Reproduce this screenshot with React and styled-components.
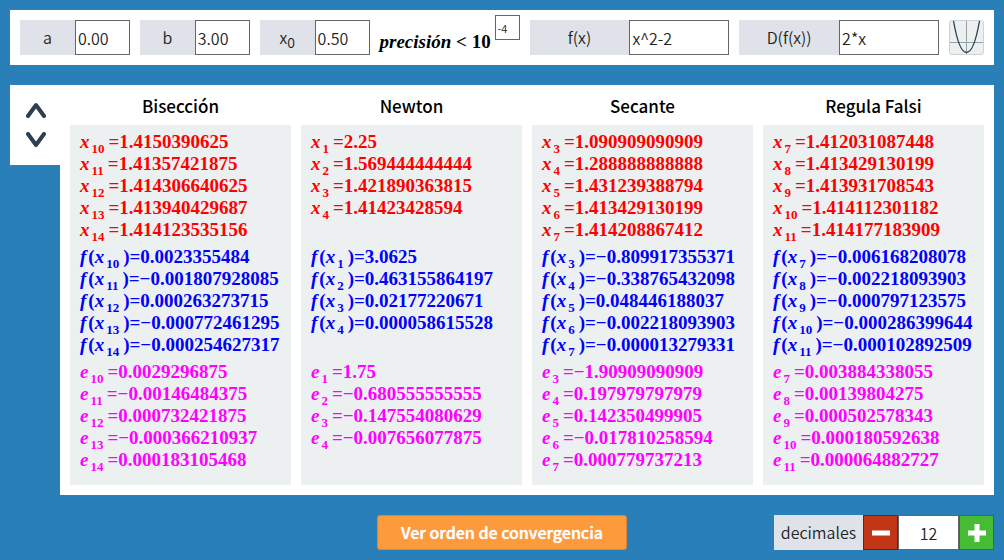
import React, { useState } from "react";
import styled, { createGlobalStyle } from "styled-components";

const sans = '"Noto Sans CJK SC", "Noto Sans", sans-serif';
const serif = '"Liberation Serif", "Times New Roman", serif';

const GlobalStyle = createGlobalStyle`
  * { box-sizing: border-box; }
  body {
    margin: 0;
    background: #2980b9;
    color: #000;
    font-family: ${sans};
    font-size: 16px;
    font-weight: 350;
  }
  input, button { font-family: inherit; font-size: inherit; font-weight: inherit; color: inherit; }
`;

const Page = styled.main`
  display: flex;
  flex-direction: column;
  gap: 20px;
  padding: 10px;
`;

const Toolbar = styled.form`
  display: flex;
  align-items: center;
  gap: 10px;
  padding: 10px;
  background: #fff;
`;

const Field = styled.div`
  display: flex;
  flex: ${(p) => (p.$wide ? "200 1 0" : "110 1 0")};
  min-width: 0;
  height: 35px;
`;

const FieldLabel = styled.label`
  flex: 1 1 50%;
  display: flex;
  align-items: center;
  justify-content: center;
  padding-bottom: 1px;
  background: #dfe2e8;
  color: #222;
  line-height: 24px;
`;

const LabelSub = styled.sub`
  font-size: 14px;
  line-height: 0;
  vertical-align: -4px;
`;

const TextInput = styled.input`
  flex: 1 1 50%;
  min-width: 0;
  padding: 1px 2px;
  border: 1px solid #666;
  border-radius: 0;
  background: #fff;
  color: #222;
`;

const Precision = styled.div`
  flex: none;
  display: flex;
  justify-content: space-between;
  width: 140px;
  height: 45px;
  margin: -5px 0;
`;

const PrecisionLabel = styled.label`
  align-self: center;
  font: bold 19px/22px ${serif};
  padding-top: 8px;
  white-space: nowrap;
`;

const ExponentInput = styled.input`
  width: 25px;
  height: 25px;
  padding: 0 2px;
  border: 1px solid #666;
  background: #fff;
  color: #222;
  font-size: 11px;
`;

const PlotButton = styled.button`
  flex: none;
  width: 35px;
  height: 35px;
  padding: 0;
  border: 1px solid #cbd2d9;
  border-radius: 3px;
  background: #ecf0f1;
  overflow: hidden;
  svg { display: block; }
`;

const Results = styled.div`
  display: flex;
  align-items: flex-start;
`;

const Stepper = styled.nav`
  flex: none;
  display: flex;
  flex-direction: column;
  width: 50px;
  padding: 10px 8px 10px 10px;
  background: #fff;
`;

const StepButton = styled.button`
  display: flex;
  align-items: center;
  justify-content: center;
  height: 30px;
  padding: 0;
  border: 0;
  background: none;
`;

const Methods = styled.div`
  flex: 1;
  min-width: 0;
  display: grid;
  grid-template-columns: repeat(4, minmax(0, 1fr));
  gap: 10px;
  padding: 0 10px 10px;
  background: #fff;
`;

const Method = styled.section`
  display: flex;
  flex-direction: column;
`;

const MethodTitle = styled.h2`
  margin: 0;
  padding-top: 2px;
  font-size: 17px;
  font-weight: 500;
  line-height: 38px;
  text-align: center;
`;

const Values = styled.div`
  display: flex;
  flex-direction: column;
  gap: 5px;
  padding: 6px 10px 14px;
  background: #ecf0f1;
`;

const ValueList = styled.ul`
  list-style: none;
  margin: 0;
  padding: 0;
  min-height: 110px;
  color: ${(p) => p.$color};
  font: bold 19px/22px ${serif};
  white-space: nowrap;
`;

const FunctionName = styled.i`
  margin-right: 2px;
`;

const Index = styled.sub`
  margin: 0 4px 0 2px;
  font-size: 13px;
  line-height: 0;
  vertical-align: -5px;
`;

const Footer = styled.footer`
  display: grid;
  grid-template-columns: 1fr auto 1fr;
`;

const OrderButton = styled.button`
  grid-column: 2;
  width: 250px;
  height: 35px;
  padding: 0 0 2px;
  border: 1px solid #d9853b;
  border-radius: 3px;
  background: #fd9a3c;
  color: #fff;
  font-size: 16px;
  font-weight: 500;
  text-shadow: 0 0 1px #fff;
`;

const Decimals = styled.div`
  justify-self: end;
  display: flex;
  height: 35px;
`;

const DecimalsLabel = styled.label`
  display: flex;
  align-items: center;
  justify-content: center;
  width: 89px;
  padding-bottom: 1px;
  background: #dfe2e8;
  color: #222;
`;

const CountButton = styled.button`
  display: flex;
  align-items: center;
  justify-content: center;
  width: 35px;
  padding: 0;
  border: 1px solid ${(p) => (p.$plus ? "#2b7a26" : "#6e1f12")};
  background: ${(p) => (p.$plus ? "#46bc35" : "#c23616")};
`;

const CountInput = styled.input`
  width: 61px;
  padding: 1px 2px;
  border: 1px solid #666;
  background: #fff;
  color: #222;
  text-align: center;
`;

const methods = [
  {
    name: "Bisección",
    first: 10,
    x: ["1.4150390625", "1.41357421875", "1.414306640625", "1.413940429687", "1.414123535156"],
    f: ["0.0023355484", "−0.001807928085", "0.000263273715", "−0.000772461295", "−0.000254627317"],
    e: ["0.0029296875", "−0.00146484375", "0.000732421875", "−0.000366210937", "0.000183105468"],
  },
  {
    name: "Newton",
    first: 1,
    x: ["2.25", "1.569444444444", "1.421890363815", "1.41423428594"],
    f: ["3.0625", "0.463155864197", "0.02177220671", "0.000058615528"],
    e: ["1.75", "−0.680555555555", "−0.147554080629", "−0.007656077875"],
  },
  {
    name: "Secante",
    first: 3,
    x: ["1.090909090909", "1.288888888888", "1.431239388794", "1.413429130199", "1.414208867412"],
    f: ["−0.809917355371", "−0.338765432098", "0.048446188037", "−0.002218093903", "−0.000013279331"],
    e: ["−1.90909090909", "0.197979797979", "0.142350499905", "−0.017810258594", "0.000779737213"],
  },
  {
    name: "Regula Falsi",
    first: 7,
    x: ["1.412031087448", "1.413429130199", "1.413931708543", "1.414112301182", "1.414177183909"],
    f: ["−0.006168208078", "−0.002218093903", "−0.000797123575", "−0.000286399644", "−0.000102892509"],
    e: ["0.003884338055", "0.00139804275", "0.000502578343", "0.000180592638", "0.000064882727"],
  },
];

function LabeledField({ id, label, value, wide }) {
  return (
    <Field $wide={wide}>
      <FieldLabel htmlFor={id}><span>{label}</span></FieldLabel>
      <TextInput id={id} defaultValue={value} />
    </Field>
  );
}

function Series({ kind, color, first, values }) {
  return (
    <ValueList $color={color}>
      {values.map((value, i) => (
        <li key={i}>
          {kind === "f" ? <><FunctionName>f</FunctionName>(<i>x</i></> : <i>{kind}</i>}
          <Index>{first + i}</Index>
          {kind === "f" && ")"}={value}
        </li>
      ))}
    </ValueList>
  );
}

function Chevron({ down }) {
  return (
    <svg width="20" height="16" viewBox="0 0 20 16" fill="none" stroke="#2c3e50" strokeWidth="4" strokeLinecap="round" strokeLinejoin="round">
      <path d={down ? "M2 2 L10 13 L18 2" : "M2 14 L10 3 L18 14"} />
    </svg>
  );
}

export default function App() {
  const [decimals, setDecimals] = useState(12);
  return (
    <Page>
      <GlobalStyle />
      <Toolbar>
        <LabeledField id="a" label="a" value="0.00" />
        <LabeledField id="b" label="b" value="3.00" />
        <LabeledField id="x0" label={<>x<LabelSub>0</LabelSub></>} value="0.50" />
        <Precision>
          <PrecisionLabel htmlFor="precision"><i>precisión</i> &lt; 10</PrecisionLabel>
          <ExponentInput id="precision" defaultValue="-4" />
        </Precision>
        <LabeledField id="fx" label="f(x)" value="x^2-2" wide />
        <LabeledField id="dfx" label="D(f(x))" value="2*x" wide />
        <PlotButton type="button" aria-label="Gráfica">
          <svg width="33" height="33" viewBox="0 0 33 33" fill="none">
            <path d="M16.5 0V33M0 21.5H33" stroke="#95a5a6" />
            <path d="M3.500 0C7 20 11 31.500 16.500 31.500S26 20 29.500 0" stroke="#2c3e50" strokeWidth="1.300" />
          </svg>
        </PlotButton>
      </Toolbar>

      <Results>
        <Stepper>
          <StepButton type="button" aria-label="Anterior"><Chevron /></StepButton>
          <StepButton type="button" aria-label="Siguiente"><Chevron down /></StepButton>
        </Stepper>
        <Methods>
          {methods.map((m) => (
            <Method key={m.name}>
              <MethodTitle>{m.name}</MethodTitle>
              <Values>
                <Series kind="x" color="#f00" first={m.first} values={m.x} />
                <Series kind="f" color="#00f" first={m.first} values={m.f} />
                <Series kind="e" color="#f0f" first={m.first} values={m.e} />
              </Values>
            </Method>
          ))}
        </Methods>
      </Results>

      <Footer>
        <OrderButton type="button">Ver orden de convergencia</OrderButton>
        <Decimals>
          <DecimalsLabel htmlFor="decimals">decimales</DecimalsLabel>
          <CountButton type="button" aria-label="Menos" onClick={() => setDecimals(decimals - 1)}>
            <svg width="20" height="20" viewBox="0 0 20 20"><path d="M1 7.500H19V12.500H1Z" fill="#fff" /></svg>
          </CountButton>
          <CountInput id="decimals" value={decimals} onChange={(e) => setDecimals(Number(e.target.value) || 0)} />
          <CountButton type="button" $plus aria-label="Más" onClick={() => setDecimals(decimals + 1)}>
            <svg width="20" height="20" viewBox="0 0 20 20"><path d="M1 7.500H7.500V1H12.500V7.500H19V12.500H12.500V19H7.500V12.500H1Z" fill="#fff" /></svg>
          </CountButton>
        </Decimals>
      </Footer>
    </Page>
  );
}
